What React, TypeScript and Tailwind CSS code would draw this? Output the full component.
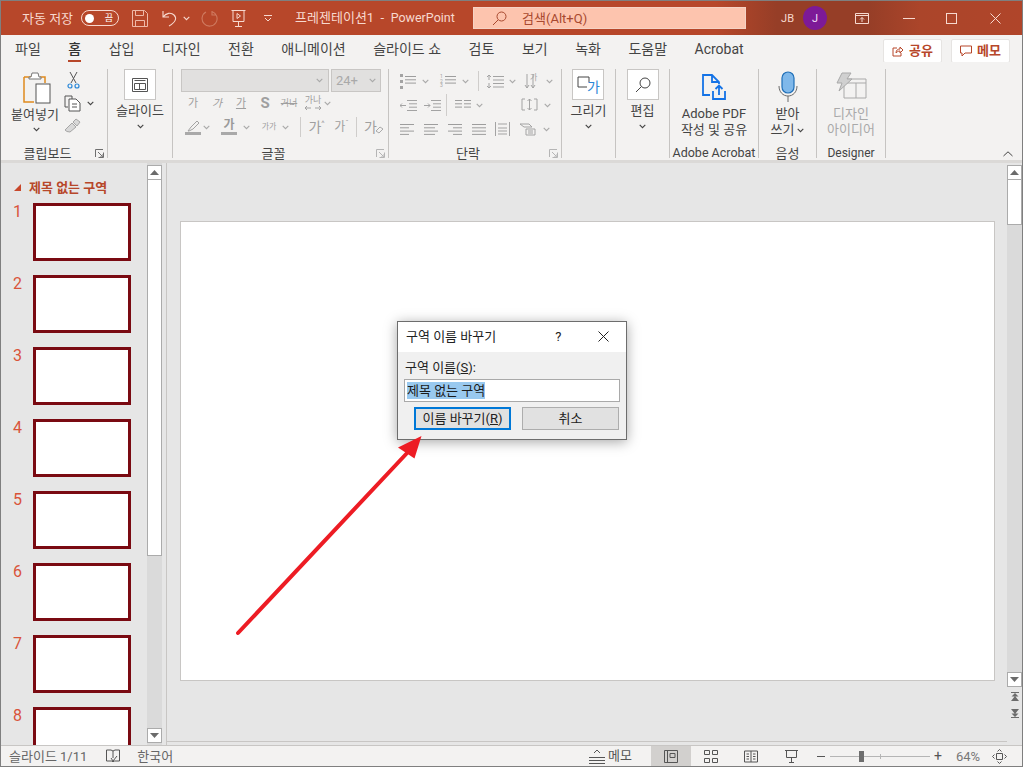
import type { ReactNode } from 'react';

const Chev = ({ c = '#6b6b6b', className = '' }: { c?: string; className?: string }) => (
  <svg width="7" height="5" viewBox="0 0 7 5" className={`shrink-0 ${className}`} fill="none" stroke={c} strokeWidth="1.1">
    <path d="M.7 .8 3.500 3.600 6.300 .8" />
  </svg>
);

const GrayChev = () => <Chev c="#a9a9a9" />;

const Launcher = ({ c = '#7a7a7a' }: { c?: string }) => (
  <svg width="9" height="9" viewBox="0 0 9 9" fill="none" stroke={c} strokeWidth="1">
    <path d="M.5 8V.5H8M8.500 3.500v5H3.500M3 3l4.500 4.500M5 8h3V5" />
  </svg>
);

const Lines = ({ w = 16, rows = [0, 0, 0, 0], c = '#9d9d9d' }: { w?: number; rows?: number[]; c?: string }) => (
  <svg width={w} height="13" viewBox={`0 0 ${w} 13`} stroke={c} strokeWidth="1" className="shrink-0">
    {rows.map((inset, i) => (
      <path key={i} d={inset >= 0 ? `M0 ${1.5 + i * 3.3}H${w - inset}` : `M${-inset} ${1.5 + i * 3.3}H${w}`} />
    ))}
  </svg>
);

const Group = ({ w, label, children, launcher, labelCls = 'text-[13px]' }: { w: number; label: string; children: ReactNode; launcher?: string; labelCls?: string }) => (
  <div className="relative flex flex-col shrink-0 h-[89px] mt-[7px] border-r border-[#c6c4c2]" style={{ width: w }}>
    <div className="flex-1 min-h-0">{children}</div>
    <div className={`h-[14px] -mb-[2px] flex items-center justify-center leading-none text-[#444] ${labelCls} ${launcher ? 'pr-[14px]' : ''}`}>{label}</div>
    {launcher && (
      <span className="absolute right-[3px] bottom-[0px]">
        <Launcher c={launcher} />
      </span>
    )}
  </div>
);

const Big = ({ icon, label, w = 32 }: { icon: ReactNode; label: string; w?: number }) => (
  <div className="flex flex-col items-center">
    <div className="flex items-center justify-center h-[31px] bg-white border border-[#c8c6c4]" style={{ width: w }}>
      {icon}
    </div>
    <div className="mt-[2px] text-[13px] leading-[18px] text-[#444]">{label}</div>
    <Chev c="#444" className="mt-[4px]" />
  </div>
);

const Cell = ({ w, children, cls = '' }: { w: number; children: ReactNode; cls?: string }) => (
  <span className={`flex items-center justify-center shrink-0 whitespace-nowrap text-[#9f9f9f] leading-none ${cls}`} style={{ width: w }}>
    {children}
  </span>
);

const Sep = ({ h = 20 }: { h?: number }) => <span className="block w-px bg-[#cfcdcb] shrink-0" style={{ height: h }} />;

const FontGroup = () => (
  <div className="flex flex-col pl-[8px]">
    <div className="flex gap-[2px]">
      <div className="w-[148px] h-[23px] bg-[#e1e0df] border border-[#c8c6c4] flex items-center justify-end pr-[5px]">
        <GrayChev />
      </div>
      <div className="w-[50px] h-[23px] bg-[#e1e0df] border border-[#c8c6c4] flex items-center justify-between px-[4px] text-[13px] text-[#a9a9a9]">
        24+
        <GrayChev />
      </div>
    </div>
    <div className="flex items-center h-[24px] -mt-[1px] text-[11px]">
      <Cell w={24}>가</Cell>
      <Cell w={24} cls="italic">가</Cell>
      <Cell w={24} cls="underline">가</Cell>
      <Cell w={24} cls="text-[15px] font-bold">S</Cell>
      <Cell w={24} cls="line-through text-[9px]">거너</Cell>
      <span className="w-[24px] shrink-0 flex flex-col items-center text-[#9f9f9f] text-[9px] leading-[10px]">
        가나
        <svg width="16" height="6" viewBox="0 0 16 6" fill="none" stroke="#a3a3a3"><path d="M0 3h6M2 1 0 3l2 2M10 3h6M14 1l2 2-2 2" /></svg>
      </span>
      <span className="-ml-[1px]"><GrayChev /></span>
    </div>
    <div className="flex items-center h-[24px] text-[12px]">
      <span className="w-[20px] ml-[2px] flex flex-col items-center shrink-0">
        <svg width="16" height="12" viewBox="0 0 16 12" fill="none" stroke="#a3a3a3" strokeWidth="1">
          <path d="M3 11 6 7l6-6 2 2-6 6-4 2z" />
        </svg>
        <span className="w-[16px] h-[3px] bg-[#a9a9a9]" />
      </span>
      <GrayChev />
      <span className="w-[16px] ml-[11px] flex flex-col items-center shrink-0 text-[#9a9a9a] font-bold leading-[13px]">
        가
        <span className="w-[16px] h-[3px] bg-[#a9a9a9]" />
      </span>
      <span className="ml-[6px]"><GrayChev /></span>
      <Cell w={16} cls="ml-[11px] text-[8px]">가가</Cell>
      <span className="ml-[5px]"><GrayChev /></span>
      <span className="ml-[11px]"><Sep /></span>
      <Cell w={17} cls="ml-[7px] text-[14px]">가<span className="text-[8px] -mt-[6px]">^</span></Cell>
      <Cell w={17} cls="ml-[8px] text-[12px]">가<span className="text-[8px] -mt-[6px]">ˇ</span></Cell>
      <span className="ml-[6px]"><Sep /></span>
      <span className="ml-[7px] flex items-center text-[#9f9f9f] text-[14px] leading-none">
        가
        <svg width="9" height="10" viewBox="0 0 9 10" fill="none" stroke="#a9a9a9" className="-ml-[2px] mt-[5px]"><path d="M1 6 5 2l3 2-4 4z" /></svg>
      </span>
    </div>
  </div>
);

const Bullets = ({ numbered }: { numbered?: boolean }) => (
  <span className="flex items-center gap-[2px] w-[18px] shrink-0">
    {numbered ? (
      <span className="flex flex-col text-[5px] leading-[4.500px] text-[#a3a3a3]">
        <span>1</span><span>2</span><span>3</span>
      </span>
    ) : (
      <span className="flex flex-col gap-[3px]">
        <span className="size-[3px] bg-[#a3a3a3]" /><span className="size-[3px] bg-[#a3a3a3]" /><span className="size-[3px] bg-[#a3a3a3]" />
      </span>
    )}
    <Lines w={11} rows={[0, 0, 0]} />
  </span>
);

const IndentIcon = ({ inc }: { inc?: boolean }) => (
  <svg width="17" height="13" viewBox="0 0 17 13" fill="none" stroke="#a3a3a3">
    <path d="M7 1.500h10M9 4.800h8M9 8.200h8M7 11.500h10" />
    <path d={inc ? 'M0 6.500h6M4 4.500l2 2-2 2' : 'M0 6.500h6M2 4.500l-2 2 2 2'} />
  </svg>
);

const ParagraphGroup = () => (
  <div className="flex flex-col pl-[11px]">
    <div className="flex items-center h-[24px]">
      <Bullets />
      <span className="ml-[4px]"><GrayChev /></span>
      <span className="ml-[11px]"><Bullets numbered /></span>
      <span className="ml-[4px]"><GrayChev /></span>
      <span className="ml-[9px]"><Sep /></span>
      <svg className="ml-[7px]" width="18" height="15" viewBox="0 0 18 15" fill="none" stroke="#a3a3a3">
        <path d="M3 1v5M1 3l2-2 2 2M3 9v5M1 12l2 2 2-2M7 2.500h11M7 6h11M7 9.500h11M7 13h11" />
      </svg>
      <span className="ml-[5px]"><GrayChev /></span>
      <span className="ml-[8px] w-[16px] flex items-center text-[#a3a3a3] text-[8px] leading-none">
        <svg width="12" height="17" viewBox="0 0 12 17" fill="none" stroke="#a3a3a3"><path d="M3 1v14M1 12l2 3 2-3M9 1v14M7 12l2 3 2-3" /></svg>
        <span className="-ml-[6px] -mt-[7px]">가</span>
      </span>
      <span className="ml-[6px]"><GrayChev /></span>
    </div>
    <div className="flex items-center h-[24px]">
      <IndentIcon />
      <span className="ml-[7px]"><IndentIcon inc /></span>
      <span className="ml-[5px]"><Sep h={22} /></span>
      <span className="ml-[8px] w-[18px] flex gap-[2px]"><Lines w={7} rows={[0, 0, 0]} /><Lines w={7} rows={[0, 0, 0]} /></span>
      <span className="ml-[3px]"><GrayChev /></span>
      <span className="ml-[38px]">
        <svg width="17" height="14" viewBox="0 0 17 14" fill="none" stroke="#a3a3a3"><path d="M4 1H1v11h3M13 1h3v11h-3M8.500 1v11M6.500 3l2-2 2 2M6.500 10l2 2 2-2" /></svg>
      </span>
      <span className="ml-[6px]"><GrayChev /></span>
    </div>
    <div className="flex items-center h-[24px]">
      <Lines w={14} rows={[0, 5, 0, 5]} />
      <span className="ml-[10px]"><Lines w={14} rows={[0, 3, 0, 3]} /></span>
      <span className="ml-[10px]"><Lines w={14} rows={[0, -5, 0, -5]} /></span>
      <span className="ml-[10px]"><Lines w={14} rows={[0, 0, 0, 0]} /></span>
      <span className="ml-[9px]">
        <svg width="15" height="16" viewBox="0 0 15 16" fill="none" stroke="#a3a3a3"><path d="M.5 1v14M14.500 1v14M3 3h9M3 7h9M3 10h9M3 13h9" /></svg>
      </span>
      <span className="ml-[9px]">
        <svg width="17" height="14" viewBox="0 0 17 14" fill="none" stroke="#a3a3a3"><path d="M1 2h9l3 3H5zM7 7h9v6H7zM9 9h5M9 11h5" /></svg>
      </span>
      <span className="ml-[7px]"><GrayChev /></span>
    </div>
  </div>
);

const ClipboardGroup = () => (
  <div className="flex">
    <div className="w-[59px] ml-[6px] flex flex-col items-center">
      <svg width="30" height="32" viewBox="0 0 30 32" fill="none" className="mt-[3px]">
        <path d="M1 5h8M17 5h5v6M1 5v25h10" stroke="#e08a1e" strokeWidth="1.500" />
        <path d="M9 1h6l1 4h2v2H6V5h2z" fill="#fff" stroke="#777" />
        <rect x="13" y="12" width="14" height="19" fill="#fff" stroke="#555" />
      </svg>
      <div className="mt-[3px] mr-[5px] text-[13px] leading-[16px] text-[#444] whitespace-nowrap">붙여넣기</div>
      <Chev c="#444" className="mt-[4px] mr-[2px]" />
    </div>
    <div className="flex flex-col -ml-[3px] pt-[2px] gap-[6px]">
      <svg width="16" height="18" viewBox="0 0 16 18" fill="none" className="ml-[2px]">
        <path d="M4 1 10 12M11 1 5 12" stroke="#555" />
        <circle cx="4" cy="15" r="2" stroke="#2b88d8" strokeWidth="1.200" />
        <circle cx="11" cy="15" r="2" stroke="#2b88d8" strokeWidth="1.200" />
      </svg>
      <span className="flex items-center gap-[5px]">
        <svg width="18" height="17" viewBox="0 0 18 17" fill="none" stroke="#555">
          <path d="M4 12H1V1h7v3" />
          <path d="M5 4h7l4 4v8H5zM8 9h5M8 12h5" fill="#fff" />
        </svg>
        <Chev c="#444" />
      </span>
      <svg width="17" height="15" viewBox="0 0 17 15" fill="none" stroke="#a6a6a6">
        <path d="M1 12 8 5l4 4-6 5-3-.5zM9 4l3-3 4 3-3 4z" fill="#d8d8d8" />
      </svg>
    </div>
  </div>
);

const RibbonBar = () => (
  <div className="relative h-[98px] bg-[#f3f2f1] flex shrink-0 pl-[1px]">
    <Group w={106} label="클립보드" launcher="#6f6f6f"><ClipboardGroup /></Group>
    <Group w={65} label="">
      <div className="flex flex-col items-center">
        <Big
          label="슬라이드"
          icon={
            <svg width="16" height="14" viewBox="0 0 16 14" fill="none" stroke="#555">
              <path d="M.5 .5h15v13H.5zM2.500 2.500h11M2.500 5.500h11v6h-11zM7.500 5.500v6" />
            </svg>
          }
        />
      </div>
    </Group>
    <Group w={216} label="글꼴" launcher="#b5b5b5"><FontGroup /></Group>
    <Group w={173} label="단락" launcher="#b5b5b5"><ParagraphGroup /></Group>
    <Group w={54} label="">
      <div className="flex flex-col items-center">
        <Big
          label="그리기"
          icon={
            <span className="relative flex items-center">
              <svg width="18" height="18" viewBox="0 0 18 18" fill="none" stroke="#444"><path d="M10 11H1V1h11v5" /></svg>
              <span className="text-[#2b88d8] text-[14px] leading-none -ml-[8px] mt-[5px]">가</span>
            </span>
          }
        />
      </div>
    </Group>
    <Group w={54} label="">
      <div className="flex flex-col items-center">
        <Big
          label="편집"
          icon={
            <svg width="16" height="16" viewBox="0 0 16 16" fill="none" stroke="#444">
              <circle cx="10" cy="6" r="5" />
              <path d="M6.500 9.500 1 15" />
            </svg>
          }
        />
      </div>
    </Group>
    <Group w={89} label="Adobe Acrobat" labelCls="text-[12.500px]">
      <div className="flex flex-col items-center text-[13px] leading-[16px] text-[#444]">
        <svg width="24" height="27" viewBox="0 0 24 27" fill="none" stroke="#1473e6" strokeWidth="1.800" className="mt-[5px] mb-[5px]">
          <path d="M8 21H1V1h9l7 7v2M10 1v7h7" />
          <path d="M11 17v8h12v-8M17 21v-9M13.500 15 17 11.500 20.500 15" />
        </svg>
        <div>Adobe PDF</div>
        <div>작성 및 공유</div>
      </div>
    </Group>
    <Group w={58} label="음성">
      <div className="flex flex-col items-center text-[13px] leading-[16px] text-[#444]">
        <svg width="20" height="31" viewBox="0 0 20 31" fill="none" className="mt-[2px] mb-[4px]">
          <rect x="4" y="1" width="12" height="21" rx="6" fill="#7fb8ea" stroke="#1f6fb8" strokeWidth="1.200" />
          <path d="M1 15c0 6 4 10 9 10s9-4 9-10M10 25v6" stroke="#6b6b6b" />
        </svg>
        <div>받아</div>
        <div className="flex items-center gap-[3px]">쓰기<Chev c="#444" /></div>
      </div>
    </Group>
    <Group w={69} label="Designer" labelCls="text-[12px]">
      <div className="flex flex-col items-center text-[13px] leading-[16px] text-[#a9a9a9]">
        <svg width="31" height="27" viewBox="0 0 31 27" fill="none" stroke="#a9a9a9" className="mt-[3px] mb-[7px]">
          <path d="M8 7h22v19H8zM8 11h22M20 11v15" />
          <path d="M6 1h9l-4 6h5L3 19l3-8H1z" fill="#d0d0d0" />
        </svg>
        <div>디자인</div>
        <div>아이디어</div>
      </div>
    </Group>
    <span className="absolute right-[9px] bottom-[3px]">
      <svg width="10" height="6" viewBox="0 0 10 6" fill="none" stroke="#444"><path d="M.5 5 5 .8 9.500 5" /></svg>
    </span>
  </div>
);

const TitleBar = () => (
  <div className="h-[34px] shrink-0 flex items-center text-[#f7d9cf] bg-[linear-gradient(90deg,#b7472a_0%,#b7472a_70%,#963e27_76%,#963e27_85%,#ab452a_90%,#b0452a_100%)]">
    <span className="ml-[21px] text-[13px] leading-none">자동 저장</span>
    <span className="ml-[8px] w-[38px] h-[16px] rounded-full border border-[#f7d9cf] flex items-center justify-between pl-[3px] pr-[5px]">
      <span className="size-[9px] rounded-full bg-white" />
      <span className="text-[9px] leading-none text-white">끔</span>
    </span>
    <svg className="ml-[13px]" width="16" height="17" viewBox="0 0 16 17" fill="none" stroke="#eeb9a8">
      <path d="M.5 .5h12l3 3v13H.5zM3.500 .5v5h8v-5M3.500 16.500v-6h9v6" />
    </svg>
    <svg className="ml-[14px]" width="16" height="17" viewBox="0 0 16 17" fill="none" stroke="#f7d9cf" strokeWidth="1.100">
      <path d="M1 1v6h6M1 7c3-4 8-5 11-2 3 3 2 7-5 11" />
    </svg>
    <span className="ml-[5px]"><Chev c="#f7d9cf" /></span>
    <svg className="ml-[11px]" width="17" height="17" viewBox="0 0 17 17" fill="none" stroke="#cf7a60" strokeWidth="1.100">
      <path d="M11 1.500a7.500 7.500 0 1 1-6 .5M11 1v4h4" />
    </svg>
    <svg className="ml-[13px]" width="15" height="17" viewBox="0 0 15 17" fill="none" stroke="#f7d9cf">
      <path d="M.5 .5h14M2 .5v11h11V.5M7.500 11.500v5M4 16.500h7" />
      <path d="M6 3.500 9.500 6 6 8.500z" />
    </svg>
    <svg className="ml-[18px]" width="8" height="7" viewBox="0 0 8 7" fill="none" stroke="#f7d9cf"><path d="M0 .5h8M1 3l3 3 3-3" /></svg>
    <span className="ml-[23px] w-[164px] text-[13px] leading-none whitespace-nowrap">프레젠테이션1&nbsp; - &nbsp;<span className="text-[12.500px]">PowerPoint</span></span>
    <div className="ml-[14px] w-[273px] h-[22px] bg-[#fdc4ae] border border-[#f5d3c5] flex items-center text-[#a8492f] text-[13px]">
      <svg className="ml-[18px]" width="15" height="15" viewBox="0 0 15 15" fill="none" stroke="#a8492f">
        <circle cx="9.500" cy="5.500" r="4.500" />
        <path d="M6 9 1 14" />
      </svg>
      <span className="ml-[15px] leading-none">검색(Alt+Q)</span>
    </div>
    <span className="ml-[35px] text-[11px] leading-none">JB</span>
    <span className="ml-[9px] size-[24px] rounded-full bg-[#7d1a97] flex items-center justify-center text-[11px] text-[#f3dff7] leading-none">J</span>
    <svg className="ml-[28px]" width="14" height="11" viewBox="0 0 14 11" fill="none" stroke="#f7d9cf">
      <path d="M.5 .5h13v10H.5zM.5 2.500h13M7 9V4.500M5 6.500l2-2 2 2" />
    </svg>
    <span className="ml-[34px] w-[12px] h-px bg-[#f7d9cf]" />
    <span className="ml-[31px] size-[11px] border border-[#f7d9cf]" />
    <svg className="ml-[33px]" width="11" height="11" viewBox="0 0 11 11" stroke="#f7d9cf"><path d="M.5 .5l10 10M10.500 .5l-10 10" /></svg>
  </div>
);

const tabs = ['파일', '홈', '삽입', '디자인', '전환', '애니메이션', '슬라이드 쇼', '검토', '보기', '녹화', '도움말', 'Acrobat'];

const TabRow = () => (
  <div className="h-[27px] shrink-0 bg-[#f3f2f1] flex items-center text-[14px] text-[#444]">
    <div className="flex ml-[14px] gap-[27.500px]">
      {tabs.map((t) => (
        <span key={t} className={`relative leading-[20px] whitespace-nowrap ${t === '홈' ? 'font-medium text-[#333]' : ''}`}>
          {t}
          {t === '홈' && <span className="absolute left-0 right-0 -bottom-[3px] h-[2px] bg-[#b7472a]" />}
        </span>
      ))}
    </div>
    <div className="ml-auto mr-[12px] flex gap-[9px] mt-[5px]">
      <span className="w-[59px] h-[24px] bg-white border border-[#e6e4e2] rounded-[2px] flex items-center justify-center gap-[5px] text-[13px] font-bold text-[#b7472a]">
        <svg width="12" height="12" viewBox="0 0 12 12" fill="none" stroke="#b7472a"><path d="M5 3H1v8h8V8M4 8c0-3 2-4 4-4V2l3 3-3 3V6C6 6 5 7 4 8z" /></svg>
        공유
      </span>
      <span className="w-[59px] h-[24px] bg-white border border-[#e6e4e2] rounded-[2px] flex items-center justify-center gap-[5px] text-[13px] font-bold text-[#b7472a]">
        <svg width="12" height="12" viewBox="0 0 12 12" fill="none" stroke="#b7472a"><path d="M.5 1h11v7H5l-3 3V8H.5z" /></svg>
        메모
      </span>
    </div>
  </div>
);

const Tri = ({ up }: { up?: boolean }) => (
  <svg width="9" height="5" viewBox="0 0 9 5" fill="#6b6b6b"><path d={up ? 'M4.500 0 9 5H0z' : 'M0 0h9L4.500 5z'} /></svg>
);

const SbBtn = ({ up }: { up?: boolean }) => (
  <div className="w-[15px] h-[15px] bg-white border border-[#ababab] flex items-center justify-center shrink-0">
    <Tri up={up} />
  </div>
);

const Thumbs = () => (
  <div className="w-[146px] shrink-0 flex flex-col overflow-hidden">
    <div className="h-[40px] flex items-center pl-[13px] pt-[8px] gap-[8px] shrink-0">
      <svg width="7" height="7" viewBox="0 0 7 7" fill="#c8472b"><path d="M7 0v7H0z" /></svg>
      <span className="text-[13px] font-bold text-[#b7472a] leading-none">제목 없는 구역</span>
    </div>
    {[1, 2, 3, 4, 5, 6, 7, 8].map((n) => (
      <div key={n} className="flex shrink-0 h-[72px]">
        <span className="w-[32px] pl-[12px] pt-[1px] text-[16px] leading-[15px] text-[#d9543a]">{n}</span>
        <div className="w-[98px] h-[58px] bg-white border-[3px] border-[#7a0a12]" />
      </div>
    ))}
  </div>
);

const LeftPane = () => (
  <div className="w-[165px] shrink-0 flex">
    <Thumbs />
    <div className="w-[15px] shrink-0 flex flex-col pt-[2px] pb-[2px] bg-[#dadada]">
      <SbBtn up />
      <div className="h-[376px] bg-white border-x border-b border-[#ababab]" />
      <div className="flex-1" />
      <SbBtn />
    </div>
    <div className="w-[4px]" />
  </div>
);

const RightScroll = () => (
  <div className="w-[15px] shrink-0 flex flex-col items-center pt-[2px] bg-[#e6e6e6]">
    <SbBtn up />
    <div className="w-[15px] h-[45px] bg-white border-x border-b border-[#ababab]" />
    <div className="w-[15px] h-[447px] bg-[#dadada]" />
    <SbBtn />
    <svg className="mt-[5px]" width="8" height="9" viewBox="0 0 8 9" fill="#6b6b6b"><path d="M0 0h8v1H0zM4 1l3.500 3.500H.5zM4 4l4 5H0z" /></svg>
    <svg className="mt-[8px]" width="8" height="9" viewBox="0 0 8 9" fill="#6b6b6b"><path d="M0 8h8v1H0zM.5 4.500h7L4 8zM0 0h8L4 5z" /></svg>
  </div>
);

const Canvas = () => (
  <div className="flex-1 min-w-0 flex flex-col border-l border-[#c8c6c4]">
    <div className="flex-1 pl-[13px] pt-[58px] border-b border-[#c8c6c4] mb-[3px]">
      <div className="w-[815px] h-[460px] bg-white border border-[#c8c6c4]" />
    </div>
  </div>
);

const StatusBar = () => (
  <div className="h-[21px] shrink-0 bg-[#f3f2f1] border-t border-[#c8c6c4] flex items-center text-[13px] text-[#666]">
    <span className="ml-[8px] leading-none">슬라이드 1/11</span>
    <svg className="ml-[19px]" width="14" height="14" viewBox="0 0 14 14" fill="none" stroke="#555"><path d="M7 2 5 1H.5v11H6l1 1 1-1h5.500V1H9zM7 2v7M5 9l2 3 4-5" /></svg>
    <span className="ml-[17px] leading-none">한국어</span>
    <div className="ml-auto flex items-center h-full">
      <span className="flex items-center gap-[3px] text-[#555] mr-[19px]">
        <svg width="16" height="16" viewBox="0 0 16 16" fill="none" stroke="#555"><path d="M0 9.500h16M0 12.500h16M0 15.500h16M5 5l3-3 3 3" /></svg>
        메모
      </span>
      <span className="w-[40px] h-full bg-[#d2d0ce] flex items-center justify-center">
        <svg width="14" height="13" viewBox="0 0 14 13" fill="none" stroke="#555"><path d="M.5 .5h13v12H.5zM3.500 .5v12M6 3.500h5v4H6z" /></svg>
      </span>
      <span className="w-[40px] flex justify-center">
        <svg width="14" height="13" viewBox="0 0 14 13" fill="none" stroke="#555"><path d="M.5 .5h5v4h-5zM8.500 .5h5v4h-5zM.5 8.500h5v4h-5zM8.500 8.500h5v4h-5z" /></svg>
      </span>
      <span className="w-[40px] flex justify-center">
        <svg width="14" height="13" viewBox="0 0 14 13" fill="none" stroke="#555"><path d="M.5 1h13v11H.5zM7 1v11M2.500 4h2.500M2.500 6.500h2.500M2.500 9h2.500M9 4h2.500M9 6.500h2.500M9 9h2.500" /></svg>
      </span>
      <span className="w-[40px] flex justify-center">
        <svg width="13" height="13" viewBox="0 0 13 13" fill="none" stroke="#555"><path d="M0 .5h13M1.500 .5v7h10v-7M6.500 7.500v5M4 12.500h5" /></svg>
      </span>
      <span className="ml-[6px] w-[8px] h-px bg-[#555]" />
      <span className="ml-[5px] w-[100px] h-px bg-[#b5b5b5] relative flex items-center">
        <span className="absolute left-[29px] w-[5px] h-[11px] bg-[#6e6e6e]" />
        <span className="absolute left-[50px] w-px h-[5px] bg-[#b5b5b5]" />
      </span>
      <span className="ml-[4px] text-[14px] leading-none text-[#555] w-[9px]">+</span>
      <span className="ml-[13px] w-[24px] leading-none text-[#777]">64%</span>
      <svg className="ml-[12px] mr-[15px]" width="15" height="15" viewBox="0 0 15 15" fill="none" stroke="#555"><path d="M4.500 4.500h6v6h-6zM5.500 2.500l2-2 2 2M5.500 12.500l2 2 2-2M2.500 5.500l-2 2 2 2M12.500 5.500l2 2-2 2" /></svg>
    </div>
  </div>
);

const RenameDialog = () => (
  <div className="absolute left-[396px] top-[320px] w-[230px] h-[119px] bg-[#f0f0f0] border border-[#6d6d6d] shadow-[0_2px_12px_rgba(0,0,0,0.35)] flex flex-col text-[13px] text-[#222]">
    <div className="h-[30px] bg-white flex items-center pl-[8px] pb-[2px] shrink-0">
      <span className="leading-none">구역 이름 바꾸기</span>
      <span className="ml-[59px] leading-none">?</span>
      <svg className="ml-[37px]" width="11" height="11" viewBox="0 0 11 11" stroke="#222"><path d="M.5 .5l10 10M10.500 .5l-10 10" /></svg>
    </div>
    <div className="pl-[7px] pt-[8px] leading-[16px]">구역 이름(<span className="underline">S</span>):</div>
    <div className="ml-[6px] mt-[3px] w-[216px] h-[23px] bg-white border border-[#a9a9a9] flex items-center pl-[2px]">
      <span className="bg-[#99c9ef] leading-[17px] text-[#1a1a1a]">제목 없는 구역</span>
    </div>
    <div className="flex mt-[5px] ml-[16px] gap-[11px]">
      <button className="w-[97px] h-[23px] bg-[#e1e1e1] border-2 border-[#0078d7] leading-none">이름 바꾸기(<span className="underline">R</span>)</button>
      <button className="w-[97px] h-[23px] bg-[#e1e1e1] border border-[#adadad] leading-none">취소</button>
    </div>
  </div>
);

const Arrow = () => (
  <svg className="absolute left-[219px] top-[419px] pointer-events-none" width="220" height="230" viewBox="220 420 220 230">
    <path d="M238 633 408 452" stroke="#ed1c24" strokeWidth="4" strokeLinecap="round" />
    <path d="M421.500 436 398 447.500 414.500 458.500z" fill="#ed1c24" />
  </svg>
);

export default function App() {
  return (
    <div className="relative w-[1023px] h-[767px] overflow-hidden border border-[#7f7f7f] flex flex-col bg-[#e6e6e6] font-['Roboto','Noto_Sans_CJK_KR',sans-serif]">
      <TitleBar />
      <TabRow />
      <RibbonBar />
      <div className="h-[3px] shrink-0 bg-[#dbd9d7]" />
      <div className="flex-1 min-h-0 flex">
        <LeftPane />
        <Canvas />
        <RightScroll />
      </div>
      <StatusBar />
      <RenameDialog />
      <Arrow />
    </div>
  );
}
